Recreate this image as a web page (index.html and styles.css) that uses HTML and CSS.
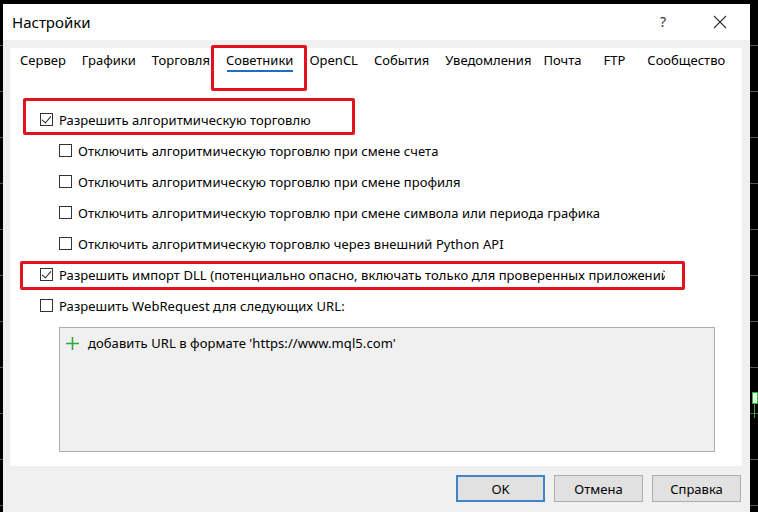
FILE: index.html
```html
<!DOCTYPE html>
<html lang="ru">
<head>
    <meta charset="UTF-8">
    <title>Настройки</title>
    <link rel="stylesheet" href="styles.css">
</head>
<body>
    <div class="chart">
        <div class="candle"></div>

        <!-- Settings dialog -->
        <div class="dialog">
            <div class="titlebar">
                <span class="title">Настройки</span>
                <span class="help">?</span>
                <svg class="close" width="14" height="14" viewBox="0 0 14 14">
                    <path d="M1 1 L13 13 M13 1 L1 13" stroke="#333" stroke-width="1.1" fill="none"/>
                </svg>
            </div>

            <div class="body">
                <div class="panel">
                    <div class="tabs">
                        <span class="tab">Сервер</span>
                        <span class="tab">Графики</span>
                        <span class="tab">Торговля</span>
                        <span class="tab active">Советники</span>
                        <span class="tab">OpenCL</span>
                        <span class="tab">События</span>
                        <span class="tab">Уведомления</span>
                        <span class="tab tab-mail">Почта</span>
                        <span class="tab tab-ftp">FTP</span>
                        <span class="tab">Сообщество</span>
                    </div>

                    <div class="options">
                        <div class="row hl-main">
                            <span class="check on"></span>
                            <span class="label">Разрешить алгоритмическую торговлю</span>
                        </div>
                        <div class="row sub">
                            <span class="check"></span>
                            <span class="label">Отключить алгоритмическую торговлю при смене счета</span>
                        </div>
                        <div class="row sub">
                            <span class="check"></span>
                            <span class="label">Отключить алгоритмическую торговлю при смене профиля</span>
                        </div>
                        <div class="row sub">
                            <span class="check"></span>
                            <span class="label">Отключить алгоритмическую торговлю при смене символа или периода графика</span>
                        </div>
                        <div class="row sub">
                            <span class="check"></span>
                            <span class="label">Отключить алгоритмическую торговлю через внешний Python API</span>
                        </div>
                        <div class="row hl-dll">
                            <span class="check on"></span>
                            <span class="label clipped">Разрешить импорт DLL (потенциально опасно, включать только для проверенных приложений)</span>
                        </div>
                        <div class="row">
                            <span class="check"></span>
                            <span class="label">Разрешить WebRequest для следующих URL:</span>
                        </div>

                        <div class="url-list">
                            <div class="url-add">
                                <svg width="13" height="13" viewBox="0 0 13 13">
                                    <path d="M6.5 0 V13 M0 6.5 H13" stroke="#2faa3c" stroke-width="1.6"/>
                                </svg>
                                <span>добавить URL в формате 'https://www.mql5.com'</span>
                            </div>
                        </div>
                    </div>
                </div>

                <div class="buttons">
                    <button class="btn default">OK</button>
                    <button class="btn">Отмена</button>
                    <button class="btn">Справка</button>
                </div>
            </div>
        </div>
    </div>
</body>
</html>
```

FILE: styles.css
```css
body {
    margin: 0;
    background-color: #000;
    font-family: "Noto Sans", "Open Sans", sans-serif;
    color: #000;
}
.chart {
    position: relative;
    height: 512px;
    overflow: hidden;
    padding: 4px 8px 0 3px;
    box-sizing: border-box;
    background-color: #000;
    background-image: repeating-linear-gradient(to bottom, transparent 0, transparent 45px, #555 45px, #555 46px);
}
.candle {
    position: absolute;
    left: 752px;
    top: 392px;
    width: 4px;
    height: 10px;
    background-color: #e8f5e8;
    border: 1px solid #2bb03a;
}
.candle::after {
    content: "";
    position: absolute;
    left: 1px;
    top: 11px;
    width: 1px;
    height: 14px;
    background-color: #2bb03a;
}
.dialog {
    background-color: #f0f0f0;
    width: 747px;
    height: 520px;
}
.titlebar {
    height: 36px;
    background-color: #fff;
    display: flex;
    align-items: center;
    padding: 0 23px 0 9px;
}
.title {
    font-size: 15px;
    flex: 1;
    margin-top: -1px;
}
.help {
    font-size: 14px;
    color: #333;
    margin-right: 47px;
    margin-top: -1px;
}
.close {
    margin-top: -1px;
}
.body {
    padding: 8px 8px 0 7px;
}
.panel {
    background-color: #fff;
    height: 418px;
    position: relative;
}
.tabs {
    display: flex;
    height: 26px;
    padding-left: 2px;
    font-size: 13px;
}
.tab {
    position: relative;
    padding: 3px 8px 0;
}
.tab-mail {
    padding: 3px 6px 0 4px;
}
.tab-ftp {
    padding: 3px 14px 0 16px;
}
.tab.active::before {
    content: "";
    position: absolute;
    left: 9px;
    right: 8px;
    top: 22px;
    height: 2px;
    background-color: #1b6fc8;
}
.tab.active::after {
    content: "";
    position: absolute;
    left: -7px;
    top: -3px;
    width: 96px;
    height: 46px;
    border: 3px solid #e3121c;
    border-radius: 2px;
    box-sizing: border-box;
}
.options {
    padding: 30px 0 0 30px;
}
.row {
    position: relative;
    height: 31px;
    display: flex;
    align-items: center;
    font-size: 13px;
    letter-spacing: 0.07px;
}
.row.sub {
    padding-left: 19px;
}
.check {
    width: 13px;
    height: 13px;
    border: 1px solid #333;
    box-sizing: border-box;
    margin-right: 6px;
    flex: none;
    background: #fff;
    position: relative;
}
.check.on::after {
    content: "";
    position: absolute;
    left: 3px;
    top: 0;
    width: 4px;
    height: 8px;
    border-right: 1px solid #222;
    border-bottom: 1px solid #222;
    transform: rotate(40deg);
}
.clipped {
    width: 606px;
    white-space: nowrap;
    overflow: hidden;
}
.hl-main::after, .hl-dll::after {
    content: "";
    position: absolute;
    border: 3px solid #e3121c;
    border-radius: 2px;
    box-sizing: border-box;
}
.hl-main::after {
    left: -17px;
    top: -6px;
    width: 332px;
    height: 37px;
}
.hl-dll::after {
    left: -20px;
    top: 2px;
    width: 665px;
    height: 29px;
}
.url-list {
    margin: 6px 0 0 19px;
    width: 656px;
    height: 125px;
    box-sizing: border-box;
    background-color: #f0f0f0;
    border: 1px solid #adadad;
    padding: 6px 0 0 6px;
}
.url-add {
    display: flex;
    align-items: center;
    gap: 9px;
    font-size: 13px;
    letter-spacing: 0.07px;
}
.buttons {
    display: flex;
    justify-content: flex-end;
    gap: 9px;
    padding: 9px 1px 0 0;
}
.btn {
    width: 89px;
    height: 27px;
    font-family: "Noto Sans", "Open Sans", sans-serif;
    font-size: 13px;
    color: #000;
    background-color: #e1e1e1;
    border: 1px solid #adadad;
    padding: 0;
}
.btn.default {
    border: 2px solid #3d87c8;
}
```
